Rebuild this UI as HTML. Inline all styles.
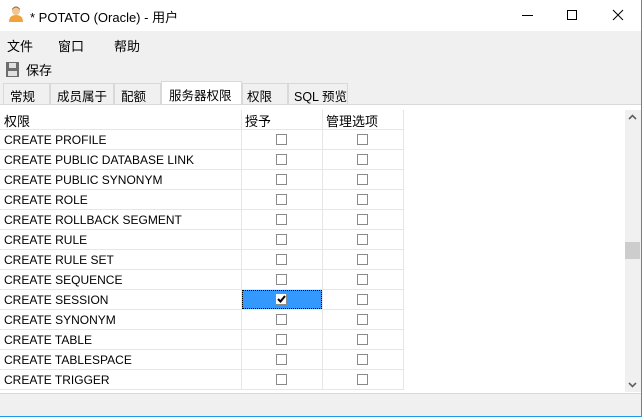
<!DOCTYPE html><html><head><style>
*{margin:0;padding:0;box-sizing:border-box}
body{width:642px;height:417px;overflow:hidden;background:#f0f0f0;font-family:"Liberation Sans","Noto Sans CJK SC",sans-serif;font-size:12px;color:#000;position:relative}
.abs{position:absolute}
.tb{left:0;top:0;width:642px;height:31px;background:#fff}
.row{position:absolute;left:0;width:403px;height:20px;border-bottom:1px solid #e6e6e6}
.c1{position:absolute;left:4px;top:3px;white-space:nowrap}
.cb{position:absolute;width:11px;height:11px;border:1px solid #8a8a8a;background:#fff;top:4px}
.vl{position:absolute;top:110px;height:280px;width:1px;background:#e6e6e6}
.tab{position:absolute;top:83px;height:21px;border:1px solid #d9d9d9;border-bottom:none;background:#f0f0f0;padding:2px 0 0 6px;font-size:12.5px;white-space:nowrap;overflow:hidden}
</style></head><body>
<div class="abs tb"></div>
<svg class="abs" style="left:8px;top:6px" width="16" height="17"><circle cx="8" cy="5" r="4" fill="#f3c58f"/><path d="M4 4 Q8 -1 12 4 L12 3 Q8 -2 4 3Z" fill="#8a5a2b"/><path d="M1 16 Q1 9 8 9 Q15 9 15 16Z" fill="#f2a23a"/></svg>
<div class="abs" style="left:30px;top:7px;font-size:13px">* POTATO (Oracle) - 用户</div>
<div class="abs" style="left:522px;top:15px;width:11px;height:1px;background:#000"></div>
<div class="abs" style="left:567px;top:10px;width:10px;height:10px;border:1px solid #000"></div>
<svg class="abs" style="left:612px;top:9px" width="12" height="12"><path d="M1 1L11 11M11 1L1 11" stroke="#000" stroke-width="1"/></svg>
<div class="abs" style="left:7px;top:36px;font-size:13px">文件</div>
<div class="abs" style="left:58px;top:36px;font-size:13px">窗口</div>
<div class="abs" style="left:114px;top:36px;font-size:13px">帮助</div>
<svg class="abs" style="left:6px;top:62px" width="14" height="16"><rect x="0" y="0" width="13" height="15" fill="#6d6d6d"/><rect x="3" y="1" width="7" height="5" fill="#e0e0e0"/><rect x="2" y="9" width="9" height="5" fill="#e0e0e0"/></svg>
<div class="abs" style="left:26px;top:60px;font-size:13px">保存</div>
<div class="tab" style="left:3px;width:47px">常规</div>
<div class="tab" style="left:50px;width:64px">成员属于</div>
<div class="tab" style="left:114px;width:47px">配额</div>
<div class="tab" style="left:161px;top:81px;height:24px;width:81px;background:#fff;padding-top:3px;padding-left:7px">服务器权限</div>
<div class="tab" style="left:242px;width:46px;padding-left:4px">权限</div>
<div class="tab" style="left:288px;width:60px;padding-left:5px">SQL 预览</div>
<div class="abs" style="left:0;top:104px;width:641px;height:1px;background:#d9d9d9"></div>
<div class="abs" style="left:0;top:105px;width:641px;height:288px;background:#fff"></div>
<div class="abs" style="left:625px;top:110px;width:16px;height:282px;background:#f0f0f0"></div>
<div class="abs" style="left:625px;top:242px;width:15px;height:17px;background:#cdcdcd"></div>
<svg class="abs" style="left:628px;top:114px" width="9" height="6"><path d="M1 5L4.5 1.5L8 5" stroke="#606060" stroke-width="1.6" fill="none"/></svg>
<svg class="abs" style="left:628px;top:382px" width="9" height="6"><path d="M1 1L4.5 4.5L8 1" stroke="#606060" stroke-width="1.6" fill="none"/></svg>
<div class="abs" style="left:0;top:393px;width:642px;height:1px;background:#d9d9d9"></div>
<div class="row" style="top:110px"><span class="c1" style="top:1px;font-size:13px">权限</span><span class="c1" style="left:245px;top:1px;font-size:13px">授予</span><span class="c1" style="left:326px;top:1px;font-size:13px">管理选项</span></div>
<div id="rows"></div>
<div class="vl" style="left:241px"></div><div class="vl" style="left:322px"></div><div class="vl" style="left:403px"></div>
<div class="abs" style="left:242px;top:290px;width:80px;height:19px;background:#3399ff;border:1px dotted #000"></div>
<div class="abs" style="left:275px;top:293px;width:12px;height:12px;border:1px solid #8a8a8a;background:#fff"></div>
<svg class="abs" style="left:277px;top:295px" width="9" height="8"><path d="M1 4L3.5 6.5L8 1" stroke="#000" stroke-width="2" fill="none"/></svg>
<div class="abs" style="left:641px;top:0;width:1px;height:417px;background:#1e9be8"></div>
<div class="abs" style="left:0;top:416px;width:642px;height:1px;background:#1e9be8"></div>
<script>
var n=["CREATE PROFILE","CREATE PUBLIC DATABASE LINK","CREATE PUBLIC SYNONYM","CREATE ROLE","CREATE ROLLBACK SEGMENT","CREATE RULE","CREATE RULE SET","CREATE SEQUENCE","CREATE SESSION","CREATE SYNONYM","CREATE TABLE","CREATE TABLESPACE","CREATE TRIGGER"],h="";
n.forEach(function(t,i){h+='<div class="row" style="top:'+(130+i*20)+'px"><span class="c1">'+t+'</span>'+(i==8?'':'<span class="cb" style="left:276px"></span>')+'<span class="cb" style="left:357px"></span></div>'});
document.getElementById("rows").innerHTML=h;
</script>
</body></html>
